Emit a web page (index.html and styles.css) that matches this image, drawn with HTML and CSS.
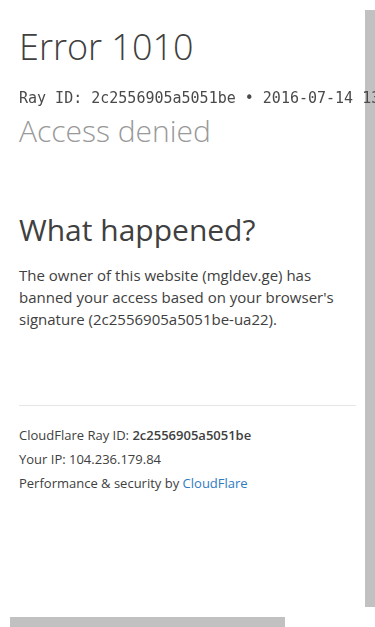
FILE: index.html
```html
<!DOCTYPE html>
<html lang="en">
<head>
<meta charset="utf-8">
<title>Access denied | mgldev.ge used CloudFlare to restrict access</title>
<link rel="stylesheet" href="styles.css">
</head>
<body>
<div class="page">
  <header class="overview">
    <h1 class="error-title">Error 1010</h1>
    <div class="ray">Ray ID: 2c2556905a5051be &bull; 2016-07-14 13:45:21 UTC</div>
    <h2 class="subtitle">Access denied</h2>
  </header>
  <section class="details">
    <h2 class="section-title">What happened?</h2>
    <p class="text">The owner of this website (mgldev.ge) has banned your access based on your browser's signature (2c2556905a5051be-ua22).</p>
  </section>
  <footer class="footer">
    <p class="footer-line">CloudFlare Ray ID: <strong class="strong">2c2556905a5051be</strong></p>
    <p class="footer-line">Your IP: 104.236.179.84</p>
    <p class="footer-line">Performance &amp; security by <a class="link" href="#">CloudFlare</a></p>
  </footer>
</div>
<div class="scroll-v"></div>
<div class="scroll-h"></div>
</body>
</html>
```

FILE: styles.css
```css
html {
  overflow: hidden;
}
body {
  margin: 0;
  background: #fff;
  color: #404040;
  font-family: "Open Sans", "Liberation Sans", sans-serif;
}
.page {
  width: 337px;
  padding-left: 19px;
}
.overview {
  padding-top: 25px;
}
.error-title {
  margin: 0;
  font-size: 36px;
  line-height: 43px;
  font-weight: 300;
  color: #404040;
}
.ray {
  position: relative;
  z-index: 2;
  margin-top: 20px;
  font-family: "DejaVu Sans Mono", monospace;
  font-size: 15px;
  font-weight: 400;
  line-height: 20px;
  white-space: nowrap;
  color: #4a4a4a;
}
.subtitle {
  margin: 5px 0 0;
  font-size: 30px;
  line-height: 36px;
  font-weight: 300;
  color: #999;
}
.details {
  padding-top: 63px;
}
.section-title {
  margin: 0;
  font-size: 30px;
  line-height: 36px;
  font-weight: 400;
  color: #404040;
}
.text {
  margin: 16px 0 0;
  font-size: 15px;
  line-height: 22px;
}
.footer {
  margin-top: 75px;
  border-top: 1px solid #e6e6e6;
  padding-top: 17px;
}
.footer-line {
  margin: 0;
  font-size: 13px;
  line-height: 24px;
}
.strong {
  font-weight: 600;
}
.link {
  color: #2f7bbf;
  text-decoration: none;
}
.scroll-v {
  position: fixed;
  z-index: 1;
  right: 0;
  top: 10px;
  width: 10px;
  height: 597px;
  background: #c1c1c1;
}
.scroll-h {
  position: fixed;
  z-index: 1;
  left: 10px;
  bottom: 0;
  width: 275px;
  height: 10px;
  background: #c1c1c1;
}
```
